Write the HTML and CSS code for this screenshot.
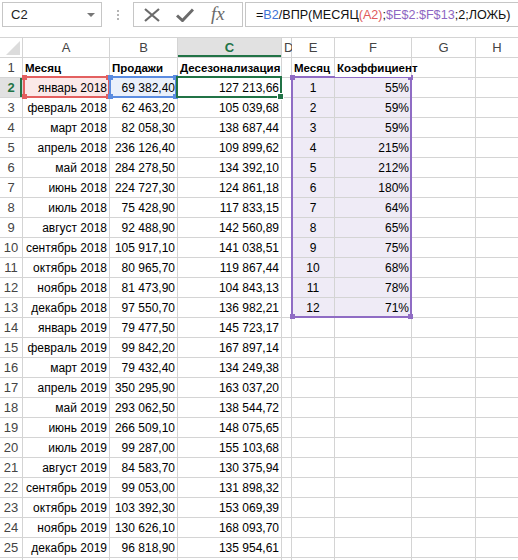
FILE: index.html
```html
<!DOCTYPE html>
<html>
<head>
<meta charset="utf-8">
<link rel="stylesheet" href="styles.css">
</head>
<body>
<div class="topbar">
  <div class="namebox"><span class="name">C2</span><span class="dd"></span></div>
  <div class="dots"><i></i><i></i><i></i></div>
  <div class="btns">
    <svg class="ico" width="18" height="14" viewBox="0 0 18 14"><path d="M2 1 L16 13 M16 1 L2 13" stroke="#6b6b6b" stroke-width="2.2" fill="none"/></svg>
    <svg class="ico" width="18" height="14" viewBox="0 0 18 14"><path d="M1 7.5 L6.5 12.5 L17 1.5" stroke="#6b6b6b" stroke-width="3" fill="none"/></svg>
    <span class="fx">fx</span>
  </div>
  <div class="formula">=<span class="fb">B2</span>/ВПР(МЕСЯЦ<span class="fr">(A2)</span>;<span class="fp">$E$2:$F$13</span>;2;ЛОЖЬ)</div>
</div>
<div class="wrap">
  <div class="sheet">
    <div class="corner"><span class="tri"></span></div><div class="ch">A</div><div class="ch">B</div><div class="ch sel">C</div><div class="ch">D</div><div class="ch">E</div><div class="ch">F</div><div class="ch">G</div><div class="ch">H</div>
    <div class="rh">1</div><div class="b">Месяц</div><div class="b">Продажи</div><div class="b">Десезонализация</div><div></div><div class="b">Месяц</div><div class="b ov">Коэффициент</div><div></div><div></div>
    <div class="rh sel">2</div><div class="r fa">январь 2018</div><div class="r fbl">69 382,40</div><div class="r">127 213,66</div><div></div><div class="c fp2">1</div><div class="r fp2">55%</div><div></div><div></div>
    <div class="rh">3</div><div class="r">февраль 2018</div><div class="r">62 463,20</div><div class="r">105 039,68</div><div></div><div class="c fp2">2</div><div class="r fp2">59%</div><div></div><div></div>
    <div class="rh">4</div><div class="r">март 2018</div><div class="r">82 058,30</div><div class="r">138 687,44</div><div></div><div class="c fp2">3</div><div class="r fp2">59%</div><div></div><div></div>
    <div class="rh">5</div><div class="r">апрель 2018</div><div class="r">236 126,40</div><div class="r">109 899,62</div><div></div><div class="c fp2">4</div><div class="r fp2">215%</div><div></div><div></div>
    <div class="rh">6</div><div class="r">май 2018</div><div class="r">284 278,50</div><div class="r">134 392,10</div><div></div><div class="c fp2">5</div><div class="r fp2">212%</div><div></div><div></div>
    <div class="rh">7</div><div class="r">июнь 2018</div><div class="r">224 727,30</div><div class="r">124 861,18</div><div></div><div class="c fp2">6</div><div class="r fp2">180%</div><div></div><div></div>
    <div class="rh">8</div><div class="r">июль 2018</div><div class="r">75 428,90</div><div class="r">117 833,15</div><div></div><div class="c fp2">7</div><div class="r fp2">64%</div><div></div><div></div>
    <div class="rh">9</div><div class="r">август 2018</div><div class="r">92 488,90</div><div class="r">142 560,89</div><div></div><div class="c fp2">8</div><div class="r fp2">65%</div><div></div><div></div>
    <div class="rh">10</div><div class="r">сентябрь 2018</div><div class="r">105 917,10</div><div class="r">141 038,51</div><div></div><div class="c fp2">9</div><div class="r fp2">75%</div><div></div><div></div>
    <div class="rh">11</div><div class="r">октябрь 2018</div><div class="r">80 965,70</div><div class="r">119 867,44</div><div></div><div class="c fp2">10</div><div class="r fp2">68%</div><div></div><div></div>
    <div class="rh">12</div><div class="r">ноябрь 2018</div><div class="r">81 473,90</div><div class="r">104 843,13</div><div></div><div class="c fp2">11</div><div class="r fp2">78%</div><div></div><div></div>
    <div class="rh">13</div><div class="r">декабрь 2018</div><div class="r">97 550,70</div><div class="r">136 982,21</div><div></div><div class="c fp2">12</div><div class="r fp2">71%</div><div></div><div></div>
    <div class="rh">14</div><div class="r">январь 2019</div><div class="r">79 477,50</div><div class="r">145 723,17</div><div></div><div></div><div></div><div></div><div></div>
    <div class="rh">15</div><div class="r">февраль 2019</div><div class="r">99 842,20</div><div class="r">167 897,14</div><div></div><div></div><div></div><div></div><div></div>
    <div class="rh">16</div><div class="r">март 2019</div><div class="r">79 432,40</div><div class="r">134 249,38</div><div></div><div></div><div></div><div></div><div></div>
    <div class="rh">17</div><div class="r">апрель 2019</div><div class="r">350 295,90</div><div class="r">163 037,20</div><div></div><div></div><div></div><div></div><div></div>
    <div class="rh">18</div><div class="r">май 2019</div><div class="r">293 062,50</div><div class="r">138 544,72</div><div></div><div></div><div></div><div></div><div></div>
    <div class="rh">19</div><div class="r">июнь 2019</div><div class="r">266 509,10</div><div class="r">148 075,65</div><div></div><div></div><div></div><div></div><div></div>
    <div class="rh">20</div><div class="r">июль 2019</div><div class="r">99 287,00</div><div class="r">155 103,68</div><div></div><div></div><div></div><div></div><div></div>
    <div class="rh">21</div><div class="r">август 2019</div><div class="r">84 583,70</div><div class="r">130 375,94</div><div></div><div></div><div></div><div></div><div></div>
    <div class="rh">22</div><div class="r">сентябрь 2019</div><div class="r">99 053,00</div><div class="r">131 898,32</div><div></div><div></div><div></div><div></div><div></div>
    <div class="rh">23</div><div class="r">октябрь 2019</div><div class="r">103 392,30</div><div class="r">153 069,39</div><div></div><div></div><div></div><div></div><div></div>
    <div class="rh">24</div><div class="r">ноябрь 2019</div><div class="r">130 626,10</div><div class="r">168 093,70</div><div></div><div></div><div></div><div></div><div></div>
    <div class="rh">25</div><div class="r">декабрь 2019</div><div class="r">96 818,90</div><div class="r">135 954,61</div><div></div><div></div><div></div><div></div><div></div>
    <div class="rh"></div><div></div><div></div><div></div><div></div><div></div><div></div><div></div><div></div>
  </div>
  <div class="range red"><i class="k tl"></i><i class="k tr"></i><i class="k bl"></i><i class="k br"></i></div>
  <div class="range blue"><i class="k tl"></i><i class="k tr"></i><i class="k bl"></i><i class="k br"></i></div>
  <div class="range purple"><i class="k tl"></i><i class="k tr"></i><i class="k bl"></i><i class="k br"></i></div>
  <div class="active"><i class="handle"></i></div>
</div>
</body>
</html>
```
FILE: styles.css
```css
html, body {
  margin: 0;
  padding: 0;
  width: 518px;
  height: 560px;
  overflow: hidden;
  background: #fff;
  font-family: "Liberation Sans", Arial, sans-serif;
  color: #000;
}
.topbar {
  display: flex;
  align-items: stretch;
  height: 25px;
  padding-top: 2px;
  padding-left: 2px;
}
.namebox {
  width: 100px;
  border: 1px solid #c6c6c6;
  box-sizing: border-box;
  display: flex;
  align-items: center;
  justify-content: space-between;
  padding: 0 6px 0 8px;
  font-size: 13px;
  color: #222;
}
.dd {
  width: 0;
  height: 0;
  border-left: 4px solid transparent;
  border-right: 4px solid transparent;
  border-top: 4px solid #777;
}
.dots {
  width: 31px;
  display: flex;
  flex-direction: column;
  align-items: center;
  justify-content: center;
  gap: 2px;
}
.dots i {
  display: block;
  width: 2px;
  height: 2px;
  background: #b4b4b4;
}
.btns {
  width: 110px;
  border: 1px solid #c6c6c6;
  box-sizing: border-box;
  display: flex;
  align-items: center;
  padding-left: 9px;
  gap: 15px;
}
.fx {
  font-family: "Liberation Serif", serif;
  font-style: italic;
  font-size: 19px;
  color: #6b6b6b;
  margin-left: 2px;
  margin-top: -2px;
}
.formula {
  flex: 1;
  margin-left: 2px;
  border: 1px solid #c6c6c6;
  border-right: none;
  box-sizing: border-box;
  padding-left: 10px;
  display: flex;
  align-items: center;
  font-size: 12.6px;
  white-space: nowrap;
  overflow: hidden;
  color: #111;
}
.fb { color: #3e74d6; }
.fr { color: #e05a5a; }
.fp { color: #8d66c2; }

.wrap {
  position: relative;
  margin-top: 10px;
}
.sheet {
  display: grid;
  grid-template-columns: 22px 86px 67px 103px 9px 42px 76px 63px 1fr;
  grid-auto-rows: 19px;
  gap: 1px;
  padding-top: 1px;
  background: #d4d4d4;
  font-size: 12px;
  line-height: 20px;
}
.sheet > div {
  background: #fff;
  white-space: nowrap;
  overflow: visible;
  padding: 0 2px;
  min-width: 0;
}
.corner { position: relative; }
.tri {
  position: absolute;
  right: 2px;
  bottom: 2px;
  width: 0;
  height: 0;
  border-left: 14px solid transparent;
  border-bottom: 14px solid #dcdcdc;
}
.ch {
  text-align: center;
  color: #444;
  font-size: 13px;
}
.ch.sel {
  background: #e1e1e1 !important;
  color: #217346;
  font-weight: bold;
  box-shadow: inset 0 -2px 0 #217346;
}
.rh {
  text-align: center;
  color: #444;
  font-size: 13px;
  padding: 0 !important;
}
.rh.sel {
  background: #e1e1e1 !important;
  color: #217346;
  font-weight: bold;
  box-shadow: inset -2px 0 0 #217346;
}
.b { font-weight: bold; font-size: 11.5px; }
.ov { position: relative; z-index: 1; }
.r { text-align: right; }
.c { text-align: center; }
.sheet > .fa { background: #fbe9e9; }
.sheet > .fbl { background: #eaf0fb; }
.sheet > .fp2 { background: #efebf6; }

.range {
  position: absolute;
  box-sizing: border-box;
  border: 2px solid;
}
.range .k {
  position: absolute;
  width: 5px;
  height: 5px;
  background: currentColor;
}
.k.tl { left: -3px; top: -3px; }
.k.tr { right: -3px; top: -3px; }
.k.bl { left: -3px; bottom: -3px; }
.k.br { right: -3px; bottom: -3px; }
.red {
  left: 23px; top: 39px; width: 87px; height: 22px;
  border-color: #e36060; color: #e36060;
}
.blue {
  left: 109px; top: 39px; width: 68px; height: 22px;
  border-color: #5b8ce0; color: #5b8ce0;
}
.purple {
  left: 291px; top: 39px; width: 121px; height: 242px;
  border-color: #8f6cc4; color: #8f6cc4;
}
.active {
  position: absolute;
  left: 176px; top: 39px; width: 106px; height: 22px;
  box-sizing: border-box;
  border: 2px solid #217346;
}
.handle {
  position: absolute;
  right: -4px;
  bottom: -4px;
  width: 5px;
  height: 5px;
  background: #217346;
  border: 1px solid #fff;
}
```
